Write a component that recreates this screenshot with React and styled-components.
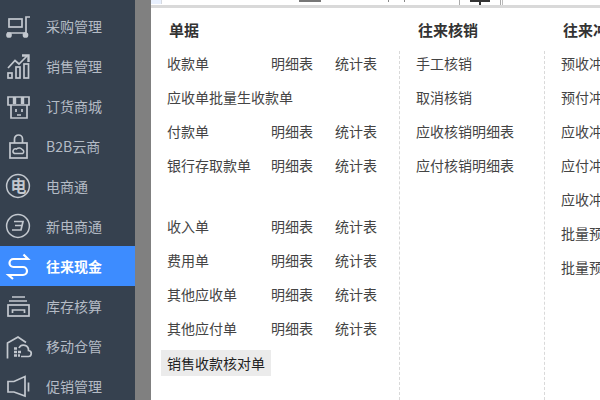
import React from "react";
import styled, { createGlobalStyle } from "styled-components";

const Global = createGlobalStyle`
  html, body { margin: 0; padding: 0; background: #fff; }
  body { font-family: "Noto Sans CJK SC", "Liberation Sans", sans-serif; }
`;

const Page = styled.div`
  display: flex;
  width: 600px;
  height: 400px;
  overflow: hidden;
`;
const Sidebar = styled.nav`
  flex: none;
  width: 135px;
  height: 400px;
  padding-top: 6px;
  box-sizing: border-box;
  background: #36414f;
  overflow: hidden;
`;
const NavItem = styled.div`
  display: flex;
  align-items: center;
  gap: 10px;
  height: 40px;
  padding-left: 4px;
  font-size: 14px;
  line-height: 20px;
  white-space: nowrap;
  color: ${(p) => (p.$active ? "#ffffff" : "#b4bbc5")};
  background: ${(p) => (p.$active ? "#3d8cff" : "transparent")};
  font-weight: ${(p) => (p.$active ? 700 : 400)};
`;
const IconSvg = styled.svg`
  flex: none;
  width: 32px;
  height: 32px;
  fill: none;
  stroke: ${(p) => (p.$active ? "#ffffff" : "#c3c8cf")};
  stroke-width: 1.7;
`;
const IconGlyph = styled.text`
  fill: #c3c8cf;
  stroke: none;
  font-family: "Noto Sans CJK SC", sans-serif;
  font-weight: 700;
  font-size: ${(p) => p.$size}px;
  text-anchor: middle;
`;
const Scrim = styled.div`
  flex: none;
  width: 16px;
  background: #808080;
`;
const Main = styled.main`
  flex: 1;
  min-width: 0;
  display: flex;
  flex-direction: column;
  background: #fff;
`;
const TopStrip = styled.div`
  flex: none;
  display: flex;
  height: 5px;
  border-bottom: 3px solid #d9d9d9;
  overflow: hidden;
`;
const SearchEdge = styled.div`
  flex: none;
  width: 10px;
  height: 4px;
  margin-right: 137px;
  background: #e8f0fe;
  border-right: 1px solid #d5d9e0;
`;
const TabEdge = styled.div`
  flex: none;
  width: 22px;
  height: 2px;
  margin-right: 67px;
  background: #777;
`;
const Tick = styled.div`
  flex: none;
  width: 1px;
  height: 2px;
  margin-right: ${(p) => p.$gap}px;
  background: #888;
`;
const ToolButton = styled.div`
  flex: none;
  position: relative;
  width: 40px;
  height: 5px;
  border-left: 1px solid #aaa;
  border-right: 1px solid #aaa;
  margin-right: 1px;
`;
const ToolGlyph = styled.svg`
  display: block;
  width: 40px;
  height: 5px;
`;
const EdgeLine = styled.div`
  flex: none;
  width: 1px;
  height: 5px;
  background: #bbb;
`;
const Columns = styled.div`
  flex: 1;
  min-height: 0;
  display: flex;
`;
const Column = styled.section`
  flex: none;
  width: ${(p) => p.$width}px;
  display: flex;
  flex-direction: column;
`;
const Heading = styled.h3`
  flex: none;
  margin: 0;
  height: 43px;
  padding-left: 18px;
  font-size: 15px;
  line-height: 43px;
  font-weight: 700;
  color: #333;
  white-space: nowrap;
`;
const ColumnBody = styled.div`
  flex: 1;
  display: flex;
  flex-direction: column;
  gap: 10px;
  padding-left: 16px;
  box-sizing: border-box;
  white-space: nowrap;
  border-right: ${(p) => (p.$plain ? "none" : "1px dashed #d9d9d9")};
`;
const Row = styled.div`
  display: grid;
  grid-template-columns: 104px 64px 1fr;
  height: 24px;
  font-size: 14px;
  line-height: 24px;
  color: #444;
`;
const WideRow = styled.div`
  height: 24px;
  font-size: 14px;
  line-height: 24px;
  color: #444;
`;
const Spacer = styled.div`
  height: 17px;
`;
const ActiveRow = styled.div`
  align-self: flex-start;
  height: 26px;
  margin-left: -6px;
  padding: 0 6px;
  background: #ebebeb;
  font-size: 14px;
  line-height: 26px;
  color: #222;
`;

const icons = {
  cart: (
    <>
      <rect x="5" y="9" width="13" height="8" />
      <path d="M26 7H22V23H3" />
      <circle cx="5" cy="25" r="2" fill="#c3c8cf" />
      <circle cx="21.5" cy="25" r="2" fill="#c3c8cf" />
    </>
  ),
  chart: (
    <>
      <rect x="4" y="23" width="4" height="5" />
      <rect x="12" y="17" width="4" height="11" />
      <rect x="20" y="14" width="4.5" height="14" />
      <path d="M4 18L11 10.5L15 14L23 6" />
      <path d="M18 5.5H24.5V12" strokeWidth="2.4" />
    </>
  ),
  store: (
    <>
      <path d="M4 15V7H25V15Z" />
      <path d="M10.5 7V14M18.5 7V14" strokeWidth="3.4" />
      <path d="M7 15V28H23V15" />
      <path d="M12 19V22M18 19V22M13 25H17" />
    </>
  ),
  bag: (
    <>
      <rect x="6" y="13" width="17" height="15" />
      <path d="M10.5 13V9A4 4 0 0 1 18.5 9V13" />
      <path d="M10.5 23.5H18.5A2 2 0 0 0 18.5 19.8A4 4 0 0 0 12.5 19A2.3 2.3 0 0 0 10.5 23.5Z" strokeWidth="1.5" />
    </>
  ),
  dian: (
    <>
      <circle cx="14" cy="16" r="11.4" strokeWidth="1.5" />
      <IconGlyph x="14.5" y="21.5" $size={16}>电</IconGlyph>
    </>
  ),
  xin: (
    <>
      <circle cx="14" cy="16" r="11.4" strokeWidth="1.5" />
      <path d="M10 11.5H19L17 20H8M11 15.5H18" strokeWidth="1.7" />
    </>
  ),
  swap: (
    <>
      <path d="M19.5 4.5L24 9H9.5A4 4 0 0 0 9.5 17H19A4 4 0 0 1 19 25H4.5L9 29" strokeWidth="2.2" />
    </>
  ),
  drawer: (
    <>
      <path d="M8 7H21M5 11H23" />
      <rect x="4" y="15" width="21" height="11" />
      <path d="M8.5 23V20H20.5V23" />
    </>
  ),
  depot: (
    <>
      <path d="M3.5 28.5V13L14 7L22 12.5" />
      <path d="M10 18.5H14M10 22H18M10 25.5H16" strokeWidth="2.4" strokeDasharray="3 1" />
      <path d="M17 26.5H24A3 3 0 0 0 24.5 20.5A5 5 0 0 0 15 18" />
    </>
  ),
  speaker: (
    <>
      <path d="M4 11.5H10L21 6.5V26L10 22H4Z" />
      <path d="M24.5 12.5V21.5" />
    </>
  ),
};

const navItems = [
  ["cart", "采购管理"],
  ["chart", "销售管理"],
  ["store", "订货商城"],
  ["bag", "B2B云商"],
  ["dian", "电商通"],
  ["xin", "新电商通"],
  ["swap", "往来现金", true],
  ["drawer", "库存核算"],
  ["depot", "移动仓管"],
  ["speaker", "促销管理"],
];

const firstGroup = ["收款单"];
const secondGroup = ["付款单", "银行存取款单"];
const thirdGroup = ["收入单", "费用单", "其他应收单", "其他应付单"];
const settleRows = ["手工核销", "取消核销", "应收核销明细表", "应付核销明细表"];
const offsetRows = ["预收冲应收", "预付冲应付", "应收冲应付", "应付冲应收", "应收冲应收", "批量预收冲应收", "批量预付冲应付"];

function DocRow({ name }) {
  return (
    <Row>
      <span>{name}</span>
      <span>明细表</span>
      <span>统计表</span>
    </Row>
  );
}

export default function App() {
  return (
    <Page>
      <Global />
      <Sidebar>
        {navItems.map(([icon, label, active]) => (
          <NavItem key={label} $active={active}>
            <IconSvg viewBox="0 0 32 32" $active={active}>
              {icons[icon]}
            </IconSvg>
            <span>{label}</span>
          </NavItem>
        ))}
      </Sidebar>
      <Scrim />
      <Main>
        <TopStrip>
          <SearchEdge />
          <TabEdge />
          <Tick $gap={15} />
          <Tick $gap={54} />
          <ToolButton>
            <ToolGlyph viewBox="0 0 40 5">
              <path d="M10 0H30V2H21V5H19V2H10Z" fill="#333" />
            </ToolGlyph>
          </ToolButton>
          <EdgeLine />
        </TopStrip>
        <Columns>
          <Column $width={249}>
            <Heading>单据</Heading>
            <ColumnBody>
              {firstGroup.map((n) => <DocRow key={n} name={n} />)}
              <WideRow>应收单批量生收款单</WideRow>
              {secondGroup.map((n) => <DocRow key={n} name={n} />)}
              <Spacer />
              {thirdGroup.map((n) => <DocRow key={n} name={n} />)}
              <ActiveRow>销售收款核对单</ActiveRow>
            </ColumnBody>
          </Column>
          <Column $width={145}>
            <Heading>往来核销</Heading>
            <ColumnBody>
              {settleRows.map((n) => <WideRow key={n}>{n}</WideRow>)}
            </ColumnBody>
          </Column>
          <Column $width={120}>
            <Heading>往来冲销</Heading>
            <ColumnBody $plain>
              {offsetRows.map((n) => <WideRow key={n}>{n}</WideRow>)}
            </ColumnBody>
          </Column>
        </Columns>
      </Main>
    </Page>
  );
}
